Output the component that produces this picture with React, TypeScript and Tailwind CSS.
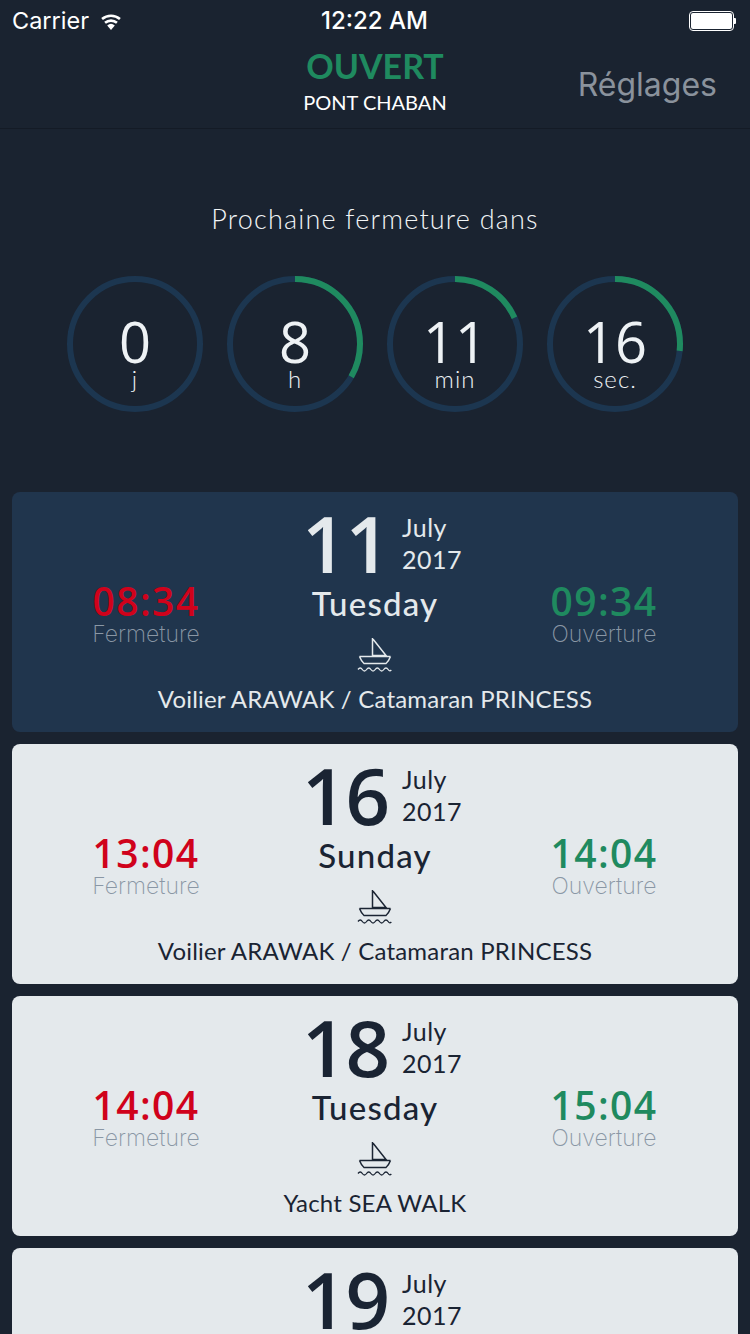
const counters = [
  { value: "0", unit: "j", progress: 0 },
  { value: "8", unit: "h", progress: 8 / 24 },
  { value: "11", unit: "min", progress: 11 / 60 },
  { value: "16", unit: "sec.", progress: 16 / 60 },
];

const passages = [
  { day: "11", weekday: "Tuesday", close: "08:34", open: "09:34", boat: "Voilier ARAWAK / Catamaran PRINCESS", active: true },
  { day: "16", weekday: "Sunday", close: "13:04", open: "14:04", boat: "Voilier ARAWAK / Catamaran PRINCESS", active: false },
  { day: "18", weekday: "Tuesday", close: "14:04", open: "15:04", boat: "Yacht SEA WALK", active: false },
  { day: "19", weekday: "Wednesday", close: "15:04", open: "16:04", boat: "Yacht SEA WALK", active: false },
];

function BoatIcon() {
  return (
    <svg width="36" height="36" viewBox="0 0 36 36" fill="none" stroke="currentColor" strokeWidth="1.5">
      <path d="M15.500 2v19M15.500 2.500 29 19.500H15.500" />
      <path d="M2.500 20.500h31M2.500 20.500c1 2.500 2.500 5.500 4.500 7h22c2-1.500 3.500-4.500 4.500-7" />
      <path d="M1 33.500c1.500-2 3-2 4.300 0s3 2 4.300 0 3-2 4.300 0 3 2 4.300 0 3-2 4.300 0 3 2 4.300 0 3-2 4.300 0 2.400 1.500 3.200.5" strokeWidth="1.300" />
    </svg>
  );
}

function WifiIcon() {
  return (
    <svg width="24" height="18" viewBox="0 0 24 18" fill="white">
      <path d="M12 18 8.200 13.400a5.800 5.800 0 0 1 7.600 0z" />
      <path d="M6.900 11.800 5.200 9.700a10.400 10.400 0 0 1 13.600 0l-1.700 2.100a7.800 7.800 0 0 0-10.200 0z" />
      <path d="M3.900 8.100 2.200 6.100a15 15 0 0 1 19.600 0l-1.700 2a12.400 12.400 0 0 0-16.200 0z" />
    </svg>
  );
}

function Ring({ value, unit, progress }: { value: string; unit: string; progress: number }) {
  const circumference = 2 * Math.PI * 65;
  return (
    <div className="relative h-[136px] w-[136px]">
      <svg width="136" height="136" viewBox="0 0 136 136" className="absolute inset-0 -rotate-90">
        <circle cx="68" cy="68" r="65" fill="none" stroke="#1c3650" strokeWidth="6" />
        {progress > 0 ? (
          <circle
            cx="68"
            cy="68"
            r="65"
            fill="none"
            stroke="#1f8a5f"
            strokeWidth="6"
            strokeDasharray={`${circumference * progress} ${circumference}`}
          />
        ) : null}
      </svg>
      <div className="flex h-full flex-col items-center pt-[42px] text-[#eef2f5]">
        <span className="font-['Open_Sans',sans-serif] text-[56px] leading-[46px] font-normal">{value}</span>
        <span className="mt-[1px] text-[24px] leading-[28px] font-light tracking-[1px]">{unit}</span>
      </div>
    </div>
  );
}

function PassageCard({ day, weekday, close, open, boat, active }: (typeof passages)[number]) {
  return (
    <div
      className={
        active
          ? "flex h-[240px] flex-col items-center rounded-[8px] bg-[#20354d] text-[#e4e9ec]"
          : "flex h-[240px] flex-col items-center rounded-[8px] bg-[#e4e9ec] text-[#1a2433]"
      }
    >
      <div className="flex h-[92px] items-center gap-[12px] pt-[10px] pl-[14px]">
        <span className="w-[88px] font-['Open_Sans',sans-serif] text-[78px] leading-none font-semibold tracking-[-1px]">{day}</span>
        <div className="flex w-[60px] flex-col text-[25px] leading-[32px] tracking-[0.5px]">
          <span>July</span>
          <span>2017</span>
        </div>
      </div>
      <div className="grid w-full grid-cols-[268px_1fr_268px]">
        <div className="-mt-[2px] flex flex-col items-center">
          <span className="font-['Open_Sans',sans-serif] text-[39px] leading-[38px] font-semibold tracking-[1.4px] text-[#d0021b]">{close}</span>
          <span className="mt-[2px] font-['Inter',sans-serif] text-[23px] leading-[24px] font-extralight text-[#8a97a5]">Fermeture</span>
        </div>
        <div className="-mt-[1px] flex flex-col items-center">
          <span className="text-[33px] leading-[40px] font-medium tracking-[1.2px]">{weekday}</span>
          <div className="mt-[13px]">
            <BoatIcon />
          </div>
        </div>
        <div className="-mt-[2px] flex flex-col items-center">
          <span className="font-['Open_Sans',sans-serif] text-[39px] leading-[38px] font-semibold tracking-[1.4px] text-[#1f8a5f]">{open}</span>
          <span className="mt-[2px] font-['Inter',sans-serif] text-[23px] leading-[24px] font-extralight text-[#8a97a5]">Ouverture</span>
        </div>
      </div>
      <div className="mt-[11px] text-[24px] leading-[32px] tracking-[0.2px]">{boat}</div>
    </div>
  );
}

export default function App() {
  return (
    <div className="h-[1334px] w-[750px] overflow-hidden bg-[#1a2330] font-['Lato',sans-serif]">
      <div className="flex h-[40px] items-center justify-between pt-[1px] pr-[13px] pl-[12px] font-['Inter',sans-serif] text-white">
        <div className="flex w-[200px] items-center gap-[10px] text-[23.5px]">
          <span>Carrier</span>
          <WifiIcon />
        </div>
        <span className="text-[24px] font-medium">12:22 AM</span>
        <div className="flex w-[200px] items-center justify-end pr-[1px]">
          <div className="h-[20px] w-[45px] rounded-[4px] border border-white p-[1px]">
            <div className="h-full w-full rounded-[2px] bg-white" />
          </div>
          <div className="h-[6px] w-[2px] rounded-r-[1px] bg-white" />
        </div>
      </div>

      <div className="relative flex h-[89px] flex-col items-center border-b border-[#141b26] pt-[4px]">
        <span className="text-[34px] leading-[44px] font-bold text-[#1f8a5f]">OUVERT</span>
        <span className="text-[20px] leading-[28px] text-white">PONT CHABAN</span>
        <span className="absolute top-[20px] right-[33px] font-['Inter',sans-serif] text-[32px] leading-[50px] text-[#8a929c]">Réglages</span>
      </div>

      <div className="flex h-[363px] flex-col items-center pt-[72px]">
        <div className="text-[27px] leading-[36px] font-light tracking-[1.2px] text-[#f1f4f6]">Prochaine fermeture dans</div>
        <div className="mt-[39px] flex gap-[24px]">
          {counters.map((c) => (
            <Ring key={c.unit} {...c} />
          ))}
        </div>
      </div>

      <div className="flex flex-col gap-[12px] px-[12px]">
        {passages.map((p) => (
          <PassageCard key={p.day} {...p} />
        ))}
      </div>
    </div>
  );
}
